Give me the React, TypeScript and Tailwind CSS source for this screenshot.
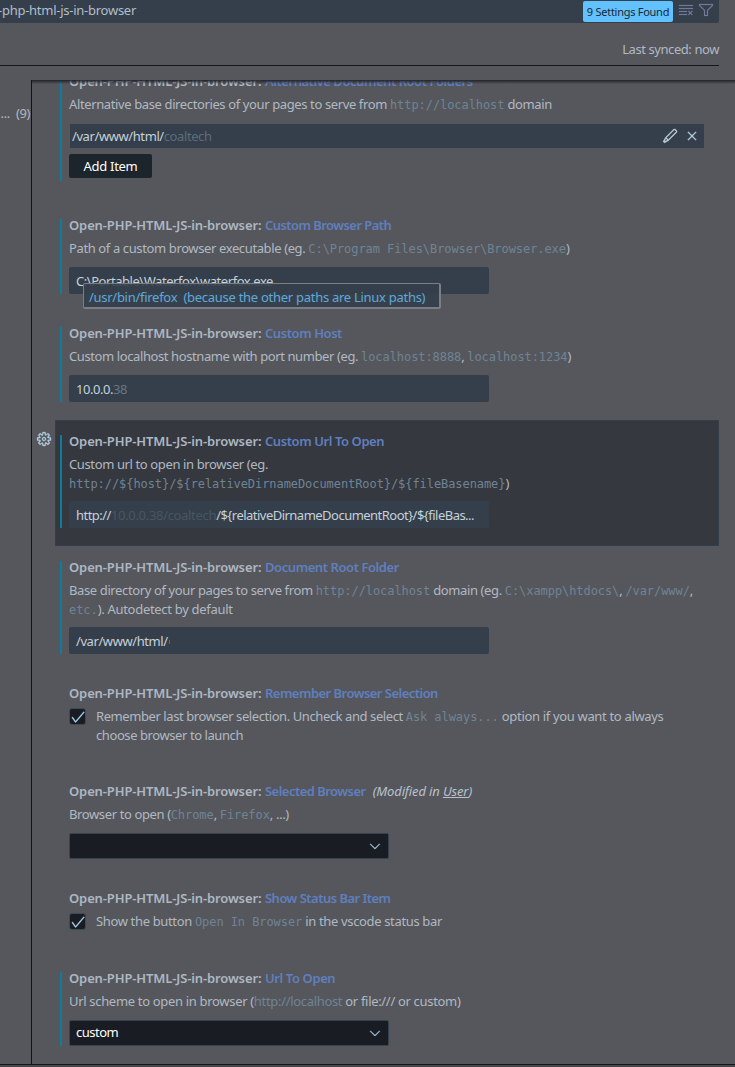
import type { ReactNode } from "react";
import { VscCheck, VscChevronDown, VscClearAll, VscClose, VscEdit, VscFilter, VscGear } from "react-icons/vsc";

function Code({ children }: { children: ReactNode }) {
  return <code className={`font-["DejaVu_Sans_Mono",monospace] text-[12px] tracking-[-0.07px] text-[#6e8496]`}>{children}</code>;
}

function Setting({ name, nameClass = "tracking-[-0.53px]", note, bar = false, height, gap = "mb-[33px]", children }: {
  name: string; nameClass?: string; note?: ReactNode; bar?: boolean; height: string; gap?: string; children: ReactNode;
}) {
  return (
    <section className={`flex shrink-0 flex-col border-l-2 pl-[7px] ${bar ? "border-[#0c7d9d]" : "border-transparent"} ${height} ${gap}`}>
      <h3 className="flex h-5 shrink-0 items-start leading-[12px] whitespace-pre">
        <span className="w-[196px] font-semibold tracking-[-0.12px] text-[#adb7c4]">Open-PHP-HTML-JS-in-browser:</span>
        <span className={`font-semibold text-[#5f7fbe] ${nameClass}`}>{name}</span>
        {note}
      </h3>
      {children}
    </section>
  );
}

function Line({ children, className = "" }: { children: ReactNode; className?: string }) {
  return <p className={`h-[19px] shrink-0 leading-[19px] whitespace-pre ${className}`}>{children}</p>;
}

function Field({ children, className = "tracking-[-0.45px]" }: { children: ReactNode; className?: string }) {
  return (
    <div className={`mt-auto h-[27px] w-[420px] shrink-0 rounded-[2px] bg-[#343f4b] pl-[7px] leading-[29px] whitespace-pre text-[#c6d1da] ${className}`}>
      {children}
    </div>
  );
}

function Select({ children }: { children?: ReactNode }) {
  return (
    <div className="mt-auto flex h-[26px] w-[320px] shrink-0 items-center justify-between rounded-[2px] border border-[#36444f] bg-[#191d23] pr-[5px] pl-[6px] tracking-[-0.5px] text-white">
      <span>{children}</span>
      <VscChevronDown size={16} className="text-[#a5c6e2]" strokeWidth={0.3} />
    </div>
  );
}

function Checked() {
  return (
    <span className="mt-px flex size-[17px] shrink-0 items-center justify-center rounded-[3px] border border-[#394b59] bg-[#191d23] text-[#b4daf5]">
      <VscCheck size={16} strokeWidth={0.4} className="shrink-0" />
    </span>
  );
}

export default function App() {
  return (
    <div className="flex h-[1067px] w-[735px] flex-col overflow-hidden bg-[#56575c] font-['Noto_Sans',sans-serif] text-[13px] tracking-[-0.38px] text-[#b0b9c3]">
      <header className="mr-4 h-[66px] shrink-0 border-b border-[#16171a]">
        <div className="flex h-[23px] items-start justify-between rounded-br-[2px] bg-[#343f4b]">
          <span className="ml-[-2px] leading-[21px] tracking-[-0.26px] text-[#b2bec8]">-php-html-js-in-browser</span>
          <div className="flex items-start">
            <span className="mt-px h-[21px] w-[90px] rounded-[2px] bg-[#61c2ff] text-center text-[11px] leading-[22px] tracking-[-0.27px] whitespace-nowrap text-[#1b2733]">9 Settings Found</span>
            <VscClearAll size={16} className="mt-[2px] ml-[5px] text-[#75799a]" strokeWidth={0.2} />
            <VscFilter size={16} className="mt-[2px] mr-[5px] ml-1 text-[#75799a]" strokeWidth={0.2} />
          </div>
        </div>
        <div className="pt-[17px] text-right leading-[19px] tracking-[-0.42px]">Last synced: now</div>
      </header>
      <div className="mt-[14px] flex h-[985px] shrink-0 border-b border-[#16171a]">
        <aside className="w-[31px] shrink-0 pt-[24px] pr-px text-right leading-[19px] whitespace-pre">...  (9)</aside>
        <main className="relative flex min-w-0 flex-1 flex-col overflow-hidden border-l border-[#111216] pl-[28px]">
          <div className="absolute inset-x-0 top-0 z-10 h-[4px] bg-linear-to-b from-[#222328] to-transparent" />
          <Setting name="Alternative Document Root Folders" nameClass="tracking-[-0.46px]" bar height="-mt-[5px] h-[106px]" gap="mb-[38px]">
            <Line>Alternative base directories of your pages to serve from <Code>http://localhost</Code> domain</Line>
            <div className="mt-[10px] ml-px flex h-6 w-[634px] shrink-0 items-center bg-[#343f4b] pl-[2px]">
              <span className="flex-1 pt-px tracking-[-0.41px] text-[#c6d1da]">/var/www/html/<span className="text-[#5c6d79]">coaltech</span></span>
              <VscEdit size={16} className="mr-[6px] text-[#c0d3e2]" strokeWidth={0.3} />
              <VscClose size={16} className="mr-[4px] text-[#c0d3e2]" strokeWidth={0.3} />
            </div>
            <button className="mt-[6px] h-6 w-[83px] shrink-0 rounded-[2px] bg-[#1d252c] leading-6 tracking-[-0.3px] text-white">Add Item</button>
          </Setting>
          <Setting name="Custom Browser Path" nameClass="tracking-[-0.56px]" bar height="relative h-[75px]">
            <Line>Path of a custom browser executable (eg. <Code>C:\Program Files\Browser\Browser.exe</Code>)</Line>
            <Field>C:\Portable\Waterfox\waterfox.exe</Field>
            <div className="absolute top-[64px] left-[21px] h-[26px] w-[358px] rounded-[2px] border border-r-2 border-b-2 border-[#7b7e82] bg-[#343f4b]/90 pl-[5px] leading-[27px] tracking-[-0.28px] whitespace-pre text-[#5fa9d8]">/usr/bin/firefox  (because the other paths are Linux paths)</div>
          </Setting>
          <Setting name="Custom Host" nameClass="tracking-[-0.43px]" bar height="h-[75px]">
            <Line className="tracking-[-0.4px]">Custom localhost hostname with port number (eg. <Code>localhost:8888</Code>, <Code>localhost:1234</Code>)</Line>
            <Field>10.0.0.<span className="text-[#687680]">38</span></Field>
          </Setting>
          <div className="-mt-[15px] mb-[15px] -ml-[20px] flex shrink-0">
            <VscGear size={16} className="mt-[11px] ml-[-4px] shrink-0 text-[#b0cbe0]" strokeWidth={0.3} />
            <div className="ml-[3px] h-[126px] w-[664px] shrink-0 border border-[#343f4b] bg-[#35383f] pt-[14px] pl-1">
              <Setting name="Custom Url To Open" nameClass="tracking-[-0.42px]" bar height="h-[93px]" gap="">
                <Line>Custom url to open in browser (eg.</Line>
                <Line><Code>{"http://${host}/${relativeDirnameDocumentRoot}/${fileBasename}"}</Code>)</Line>
                <Field className="tracking-[-0.52px]">http://<span className="tracking-[-0.32px] text-[#485661]">10.0.0.38/coaltech</span>{"/${relativeDirnameDocumentRoot}/${fileBas..."}</Field>
              </Setting>
            </div>
          </div>
          <Setting name="Document Root Folder" nameClass="tracking-[-0.43px]" bar height="h-[93px]">
            <Line>Base directory of your pages to serve from <Code>http://localhost</Code> domain (eg. <Code>C:\xampp\htdocs\</Code>, <Code>/var/www/</Code>,</Line>
            <Line className="tracking-[-0.3px]"><Code>etc.</Code>). Autodetect by default</Line>
            <Field className="tracking-[-0.42px]">/var/www/html/<span className="mb-[2px] ml-px inline-block h-[4px] w-px bg-[#3274a8]" /></Field>
          </Setting>
          <Setting name="Remember Browser Selection" height="h-[65px]">
            <div className="flex gap-[10px]">
              <Checked />
              <div className="tracking-[-0.42px]">
                <Line>Remember last browser selection. Uncheck and select <Code>Ask always...</Code><span className="tracking-[-0.33px]"> option if you want to always</span></Line>
                <Line>choose browser to launch</Line>
              </div>
            </div>
          </Setting>
          <Setting name="Selected Browser" height="h-[74px]" note={<i className="ml-[7px] tracking-[-0.14px] text-[#b8c2cd]">(Modified in <u>User</u>)</i>}>
            <Line>Browser to open (<Code>Chrome</Code>, <Code>Firefox</Code>, ...)</Line>
            <Select />
          </Setting>
          <Setting name="Show Status Bar Item" height="h-[47px]">
            <div className="flex gap-[10px]">
              <Checked />
              <Line className="tracking-[-0.35px]">Show the button <Code>Open In Browser</Code> in the vscode status bar</Line>
            </div>
          </Setting>
          <Setting name="Url To Open" nameClass="tracking-[-0.39px]" bar height="h-[74px]" gap="">
            <Line className="tracking-[-0.32px]">Url scheme to open in browser (<span className="text-[#6e8496]">http://localhost</span> or file:/// or custom)</Line>
            <Select>custom</Select>
          </Setting>
        </main>
      </div>
      <div className="flex-1 bg-[#46474b]" />
    </div>
  );
}
